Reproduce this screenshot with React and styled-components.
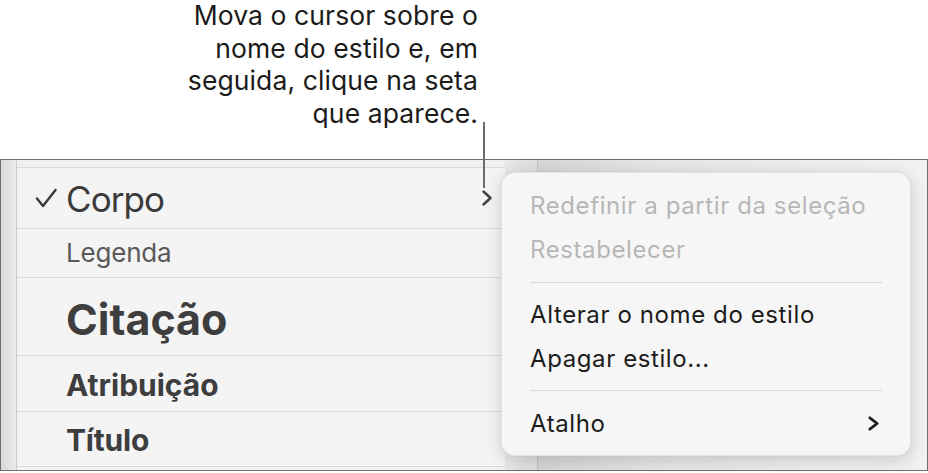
import React from 'react'
import styled, { createGlobalStyle } from 'styled-components'

const GlobalStyle = createGlobalStyle`
  html, body {
    margin: 0;
    padding: 0;
    background: #ffffff;
  }
  body {
    font-family: Inter, "Liberation Sans", Arial, sans-serif;
    -webkit-font-smoothing: antialiased;
  }
`

const styles = [
  { name: 'Corpo', size: 35, weight: 400, color: '#3b3b3b', height: 61, checked: true, arrow: true, shift: 1, track: -0.9 },
  { name: 'Legenda', size: 26, weight: 400, color: '#595959', height: 49, track: -0.2 },
  { name: 'Citação', size: 43, weight: 700, color: '#3e3e3e', height: 78, shift: 3, track: 0 },
  { name: 'Atribuição', size: 30, weight: 700, color: '#3e3e3e', height: 56, shift: 1, track: 0 },
  { name: 'Título', size: 30, weight: 700, color: '#3e3e3e', height: 55, shift: 1, track: -0.2 },
]

const CheckIcon = () => (
  <svg width="22" height="20" viewBox="0 0 22 20" fill="none">
    <path
      d="M2 10.5 L8 18 L20.5 2"
      stroke="#3a3a3a"
      strokeWidth="2.4"
      strokeLinecap="round"
      strokeLinejoin="round"
    />
  </svg>
)

const Chevron = ({ color = '#444', w = 12, h = 18, stroke = 2.5 }) => (
  <svg width={w} height={h} viewBox={`0 0 ${w} ${h}`} fill="none">
    <path
      d={`M${stroke} ${stroke} L${w - stroke} ${h / 2} L${stroke} ${h - stroke}`}
      stroke={color}
      strokeWidth={stroke}
      strokeLinecap="round"
      strokeLinejoin="round"
    />
  </svg>
)

const App = () => {
  return (
    <>
      <GlobalStyle />
      <Page>
        <Callout>
          Mova o cursor sobre o
          <br />
          nome do estilo e, em
          <br />
          seguida, clique na seta
          <br />
          que aparece.
        </Callout>

        <Frame>
          <Gutter />
          <StyleList>
            <TopEdge />
            {styles.map(s => (
              <StyleRow key={s.name} $height={s.height}>
                <CheckCell>{s.checked && <CheckIcon />}</CheckCell>
                <StyleName
                  $size={s.size}
                  $weight={s.weight}
                  $color={s.color}
                  $shift={s.shift || 0}
                  $track={s.track}
                >
                  {s.name}
                </StyleName>
                <ArrowCell>{s.arrow && <Chevron />}</ArrowCell>
              </StyleRow>
            ))}
            <BottomEdge />
          </StyleList>
          <SideStrip />
          <Backdrop />

          <Menu>
            <MenuItem $disabled>Redefinir a partir da seleção</MenuItem>
            <MenuItem $disabled>Restabelecer</MenuItem>
            <Separator />
            <MenuItem>Alterar o nome do estilo</MenuItem>
            <MenuItem>Apagar estilo...</MenuItem>
            <Separator />
            <MenuItem>
              Atalho
              <Chevron color="#1e1e1e" w={13} h={17} stroke={2.8} />
            </MenuItem>
          </Menu>
        </Frame>

        <Leader />
      </Page>
    </>
  )
}

const Page = styled.div`
  position: relative;
  width: 928px;
  height: 473px;
  overflow: hidden;
  background: #ffffff;
`

const Callout = styled.div`
  height: 160px;
  box-sizing: border-box;
  padding-right: 450px;
  margin-top: -1px;
  text-align: right;
  font-size: 26.5px;
  line-height: 32.5px;
  color: #1b1b1b;
  letter-spacing: 0.1px;
`

/* leader line from the callout down to the row arrow */
const Leader = styled.div`
  position: absolute;
  left: 483px;
  top: 122px;
  width: 2px;
  height: 66px;
  background: #6b6b6b;
`

const Frame = styled.div`
  position: relative;
  display: flex;
  width: 928px;
  height: 312px;
  box-sizing: border-box;
  border: 1px solid #6e6e6e;
`

const Gutter = styled.div`
  width: 15px;
  border-right: 1px solid #cdcdcd;
  background: linear-gradient(to right, #d9d9d9, #ebebeb);
`

const StyleList = styled.div`
  width: 488px;
  display: flex;
  flex-direction: column;
  background: #f4f4f5;
`

const TopEdge = styled.div`
  height: 7px;
  border-bottom: 1px solid #dadada;
  background: #f0f0f1;
`

const BottomEdge = styled.div`
  flex: 1;
`

const StyleRow = styled.div`
  height: ${p => p.$height}px;
  box-sizing: border-box;
  border-bottom: 1px solid #dadada;
  display: grid;
  grid-template-columns: 31px 1fr auto;
  align-items: center;
  padding: 0 12px 0 18px;
`

const CheckCell = styled.div`
  display: flex;
  align-items: center;
  height: 20px;
`

const ArrowCell = styled.div`
  display: flex;
  align-items: center;
  padding-bottom: 1px;
`

const StyleName = styled.div`
  font-size: ${p => p.$size}px;
  font-weight: ${p => p.$weight};
  color: ${p => p.$color};
  line-height: 1.2;
  letter-spacing: ${p => p.$track}px;
  padding-top: ${p => p.$shift * 2}px;
  white-space: nowrap;
`

const SideStrip = styled.div`
  width: 32px;
  border-right: 1px solid #c4c4c4;
  background: linear-gradient(to right, #e9e9e9, #dedede);
`

const Backdrop = styled.div`
  flex: 1;
  background: linear-gradient(to right, #d6d6d6, #e6e6e6 30%, #eeeeee 70%, #f2f2f2);
`

const Menu = styled.div`
  position: absolute;
  left: 500px;
  top: 12px;
  width: 410px;
  height: 284px;
  box-sizing: border-box;
  padding: 11px 0 10px;
  display: flex;
  flex-direction: column;
  background: #f6f6f6;
  border: 1px solid rgba(0, 0, 0, 0.07);
  border-radius: 14px;
  box-shadow: 0 4px 18px rgba(0, 0, 0, 0.16), 0 0 2px rgba(0, 0, 0, 0.1);
`

const MenuItem = styled.div`
  height: 44px;
  display: flex;
  align-items: center;
  justify-content: space-between;
  padding: 0 30px 0 28px;
  font-size: 24px;
  letter-spacing: 0.6px;
  color: ${p => (p.$disabled ? '#b7b7b7' : '#1c1c1c')};
  white-space: nowrap;
`

const Separator = styled.div`
  height: 1px;
  margin: 10px 28px;
  background: #d8d8d8;
`

export default App
